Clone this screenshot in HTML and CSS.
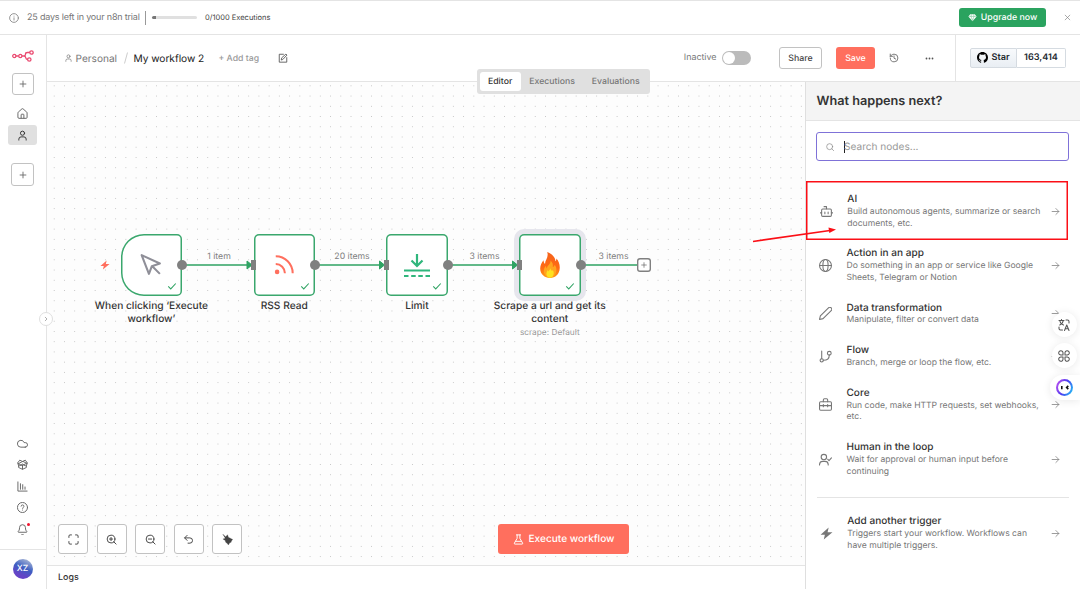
FILE: index.html
```html
<!DOCTYPE html>
<html lang="en">
<head>
  <meta charset="UTF-8">
  <meta name="viewport" content="width=device-width, initial-scale=1.0">
  <title>My workflow 2 - n8n</title>
  <link rel="stylesheet" href="styles.css">
</head>
<body>
  <!-- Shared icons -->
  <svg class="defs">
    <symbol id="i-plus" viewBox="0 0 24 24"><path d="M5 12h14M12 5v14"/></symbol>
    <symbol id="i-user" viewBox="0 0 24 24"><circle cx="12" cy="7" r="4.5"/><path d="M4 22v-2a5 5 0 0 1 5-5h6a5 5 0 0 1 5 5v2"/></symbol>
    <symbol id="i-arrow" viewBox="0 0 24 24"><path d="M3 12h18M13 4l8 8-8 8"/></symbol>
    <symbol id="i-check" viewBox="0 0 24 24"><path d="M3 13l6 6L21 6"/></symbol>
    <symbol id="i-bolt" viewBox="0 0 24 24"><path d="M16 1L1 14.5h8L7 23 23 9.5h-9z"/></symbol>
  </svg>

  <!-- Trial banner -->
  <div class="banner">
    <svg class="icon info" viewBox="0 0 24 24"><circle cx="12" cy="12" r="10.5"/><path d="M12 17v-5.5M12 7.5v.1"/></svg>
    <span class="trial">25 days left in your n8n trial</span>
    <span class="bar-divider"></span>
    <span class="progress"></span>
    <span class="executions">0/1000 Executions</span>
    <button class="upgrade">
      <svg viewBox="0 0 24 24"><path fill="#fff" d="M6 3h12l5 6-11 13L1 9z"/><path stroke="#2aa35f" d="M2 9h20M9 4L8 9l4 11 4-11-1-5"/></svg>
      <span>Upgrade now</span>
    </button>
    <svg class="icon close" viewBox="0 0 24 24"><path d="M4 4l16 16M20 4L4 20"/></svg>
  </div>

  <div class="app">
    <!-- Sidebar -->
    <nav class="sidebar">
      <svg class="logo" viewBox="0 0 22 12"><circle cx="2.3" cy="6" r="1.6"/><circle cx="8.3" cy="6" r="1.6"/><circle cx="19.5" cy="2.5" r="1.7"/><circle cx="17.3" cy="9.5" r="1.7"/><path d="M4 6h2.6M10 6h2M17.8 2.5h-2.3c-1.4 0-2 .7-2 1.7 0 1.2-.5 1.8-1.5 1.8 1 0 1.500.5 1.700 1.700.2 1.200.7 1.800 1.900 1.800"/></svg>
      <button class="side-add"><svg class="icon"><use href="#i-plus"/></svg></button>
      <a class="side-item home"><svg class="icon" viewBox="0 0 24 24"><path d="M2 10.500a2 2 0 0 1 .7-1.500l8-7a2 2 0 0 1 2.600 0l8 7a2 2 0 0 1 .7 1.500V20.500a2 2 0 0 1-2 2H4a2 2 0 0 1-2-2zM9 22v-7a1.500 1.500 0 0 1 1.500-1.500h3A1.500 1.500 0 0 1 15 15v7"/></svg></a>
      <a class="side-item active"><svg class="icon"><use href="#i-user"/></svg></a>
      <button class="side-add second"><svg class="icon"><use href="#i-plus"/></svg></button>

      <div class="side-bottom">
        <svg class="icon" viewBox="0 0 24 24"><path d="M18 20H8.500a7.500 7.500 0 1 1 7-10H18a5 5 0 1 1 0 10z"/></svg>
        <svg class="icon" viewBox="0 0 24 24"><path d="M12 13v9M1.500 8.500l4.500-6L12 5.500l6-3 4.500 6L12 14zM12 5.500L1.500 11l4.500 4L12 11l6 4 4.500-4zM3.500 13.500V18.500l8.500 4 8.500-4v-5"/></svg>
        <svg class="icon" viewBox="0 0 24 24"><path d="M2 2v20h20M7.500 18V6M12.500 18V8M17.500 18v-5"/></svg>
        <svg class="icon" viewBox="0 0 24 24"><circle cx="12" cy="12" r="11"/><path d="M9 9a3 3 0 0 1 6 .8c0 2-3 2.400-3 4.200M12 17.500v.1"/></svg>
        <span class="bell"><svg class="icon" viewBox="0 0 24 24"><path d="M10 22.500a2.200 2.200 0 0 0 4 0M3 18c-1 0-1-1-.5-1.500C4.500 14.500 5.500 12.500 5.500 8a6.500 6.500 0 0 1 13 0c0 4.500 1 6.500 3 8.500.5.5.5 1.500-.5 1.500z"/></svg></span>
      </div>
      <div class="account"><span class="avatar">XZ</span></div>
      <span class="expand"><svg class="icon" viewBox="0 0 24 24"><path d="M9 5l7 7-7 7"/></svg></span>
    </nav>

    <main class="main">
      <!-- Header -->
      <header class="header">
        <svg class="icon crumb-icon"><use href="#i-user"/></svg>
        <span class="crumb">Personal</span>
        <svg class="slash" viewBox="0 0 4 12"><path d="M3.5 .5L.5 11.5"/></svg>
        <span class="name">My workflow 2</span>
        <span class="add-tag">+ Add tag</span>
        <svg class="icon edit" viewBox="0 0 24 24"><path d="M13 3H3v19h18V11M8 16l1-4.500L19 2.500 21.500 5 12 15z"/></svg>
        <span class="inactive">Inactive</span>
        <span class="toggle"></span>
        <button class="btn share">Share</button>
        <button class="btn save">Save</button>
        <svg class="icon history" viewBox="0 0 24 24"><path d="M3 12a9.200 9.200 0 1 0 9.200-9.200A9.500 9.500 0 0 0 5.500 5.500L3 8M3 2.500V8h5.500M12 7v5.500l4 2"/></svg>
        <svg class="dots" viewBox="0 0 9 3"><circle cx="1.5" cy="1.5" r=".9"/><circle cx="4.5" cy="1.5" r=".9"/><circle cx="7.5" cy="1.5" r=".9"/></svg>
        <div class="github">
          <span class="star">
            <svg viewBox="0 0 16 16"><path d="M8 0C3.580 0 0 3.580 0 8c0 3.540 2.290 6.530 5.470 7.590.4.070.55-.17.55-.38 0-.19-.01-.82-.01-1.490-2.010.37-2.530-.49-2.690-.94-.09-.23-.48-.94-.82-1.130-.28-.15-.68-.52-.01-.53.63-.01 1.080.58 1.230.82.720 1.210 1.870.87 2.330.66.07-.52.28-.87.51-1.070-1.780-.2-3.640-.89-3.640-3.950 0-.87.31-1.590.82-2.150-.08-.2-.36-1.020.08-2.120 0 0 .67-.21 2.200.82.64-.18 1.320-.27 2-.27s1.360.09 2 .27c1.530-1.040 2.200-.82 2.200-.82.44 1.100.16 1.920.08 2.120.51.56.82 1.270.82 2.150 0 3.070-1.870 3.750-3.650 3.950.29.25.54.73.54 1.480 0 1.070-.01 1.930-.01 2.200 0 .21.15.46.55.38A8.010 8.010 0 0 0 16 8c0-4.420-3.580-8-8-8z"/></svg>
            Star
          </span>
          <span class="count">163,414</span>
        </div>
      </header>

      <div class="tabs">
        <span class="tab selected">Editor</span>
        <span class="tab">Executions</span>
        <span class="tab">Evaluations</span>
      </div>

      <div class="workspace">
        <div class="left">
          <!-- Workflow canvas -->
          <div class="canvas">
            <svg class="edges" viewBox="0 0 758 484">
              <g class="line"><path d="M135 184H201M268 184H334M400 184H467M533 184H591"/></g>
              <g class="head"><path d="M200 180l5 4-5 4zM332.500 180l5 4-5 4zM465.500 180l5 4-5 4z"/></g>
            </svg>
            <svg class="trigger-bolt"><use href="#i-bolt"/></svg>

            <div class="node trigger n1">
              <svg class="pic cursor" viewBox="0 0 24 24"><path d="M3.500 3l7 18 2.700-7.300L21 11zM13.500 13.500l7.500 7.500"/></svg>
              <svg class="check"><use href="#i-check"/></svg>
              <span class="out"></span>
              <div class="label">When clicking ‘Execute<br>workflow’</div>
            </div>
            <div class="node n2">
              <svg class="pic rss" viewBox="0 0 24 24"><path d="M3 11a10 10 0 0 1 10 10M3 2.500A18.500 18.500 0 0 1 21.500 21"/><circle cx="4.5" cy="19.5" r="2.5"/></svg>
              <svg class="check"><use href="#i-check"/></svg>
              <span class="in"></span><span class="out"></span>
              <div class="label">RSS Read</div>
            </div>
            <div class="node n3">
              <svg class="pic limit" viewBox="0 0 26 26"><path d="M13 1v12M7.500 7.500L13 13l5.500-5.500M0 17.500h26M0 23h4.500M7.200 23h4.500M14.300 23h4.500M21.500 23H26"/></svg>
              <svg class="check"><use href="#i-check"/></svg>
              <span class="in"></span><span class="out"></span>
              <div class="label">Limit</div>
            </div>
            <div class="node chosen n4">
              <svg class="pic flame" viewBox="0 0 20 26">
                <defs>
                  <linearGradient id="fire" x1="0" y1="0" x2="0" y2="1"><stop offset="0" stop-color="#f5631c"/><stop offset=".6" stop-color="#ff6a13"/><stop offset="1" stop-color="#ff9d14"/></linearGradient>
                </defs>
                <path fill="url(#fire)" d="M7.200 0c4.800 2 8.300 5.200 8.200 9.200.8-.7 1-1.600 1-2.700C18.700 9 20 12.500 19.700 16.500 19.400 22 15.500 26 10 26S.3 22 .2 16.800C.1 13.500 1.700 10.500 3.500 8.300c.2 1.700.6 3 1.500 3.800C5 7.500 9 5.500 7.200 0z"/>
                <path fill="#ffa51f" d="M10.500 8.500c2.500 2.200 2.600 4.500 2.300 6.500 1.200-.4 1.700-1.300 1.900-2.300 1.500 1.800 2 3.800 1.600 6.300-.5 3.500-3 6.500-6.300 6.500-3.500 0-6-2.700-6.200-6-.1-2.500 1-4.500 2.200-5.700 0 1.300.3 2 1 2.700C7 13 11 12.500 10.500 8.500z"/>
                <path fill="#ffe21f" d="M10.500 16c.2 2 1 2.200 1.500 3 .4-.2.500-.5.600-1 1.200 1.400 1.500 3 .8 5-.6 1.700-1.700 2.800-3.400 2.800-2.200 0-3.700-1.700-3.600-4 .1-1.800 1-3 1.600-3.700.1.800.2 1.200.6 1.500C9 18 10.500 17.500 10.500 16z"/>
              </svg>
              <svg class="check"><use href="#i-check"/></svg>
              <span class="in"></span><span class="out"></span>
              <div class="label">Scrape a url and get its<br>content<small>scrape: Default</small></div>
            </div>

            <span class="edge-label e1">1 item</span>
            <span class="edge-label e2">20 items</span>
            <span class="edge-label e3">3 items</span>
            <span class="edge-label e4">3 items</span>
            <span class="add-node"><svg class="icon"><use href="#i-plus"/></svg></span>

            <div class="controls">
              <button><svg class="icon" viewBox="0 0 24 24"><path d="M7.500 2H4.500A2.500 2.500 0 0 0 2 4.500v3M22 7.500v-3A2.500 2.500 0 0 0 19.500 2h-3M2 16.500v3A2.500 2.500 0 0 0 4.500 22h3M16.500 22h3a2.500 2.500 0 0 0 2.500-2.500v-3"/></svg></button>
              <button><svg class="icon" viewBox="0 0 24 24"><circle cx="11" cy="11" r="8.5"/><path d="M22 22l-5-5M11 7.500v7M7.500 11h7"/></svg></button>
              <button><svg class="icon" viewBox="0 0 24 24"><circle cx="11" cy="11" r="8.5"/><path d="M22 22l-5-5M7.500 11h7"/></svg></button>
              <button><svg class="icon" viewBox="0 0 24 24"><path d="M9 14L3.500 8.500 9 3M4 8.500h11a5.500 5.500 0 0 1 0 11.500h-4"/></svg></button>
              <button><svg class="icon broom" viewBox="0 0 24 24"><path d="M1.500 0L8 6l4-4.500 2 5.500 9.500 5-3 3-.5 3-3 1-3 5-3-4-3-2-1-4-5-3 5-1.500z"/></svg></button>
            </div>
            <button class="execute">
              <svg class="icon" viewBox="0 0 24 24"><path d="M9 2v7.500L3 20a1.500 1.500 0 0 0 1.500 2h15a1.500 1.500 0 0 0 1.500-2L15 9.500V2M7.500 2h9M6 16h12"/></svg>
              <span>Execute workflow</span>
            </button>
          </div>
          <div class="logs">Logs</div>
        </div>

        <!-- Node creator panel -->
        <aside class="panel">
          <h2>What happens next?</h2>
          <div class="search">
            <svg class="icon" viewBox="0 0 24 24"><circle cx="11" cy="11" r="9"/><path d="M23 23l-5.500-5.500"/></svg>
            <span class="caret"></span>
            <span class="placeholder">Search nodes...</span>
          </div>
          <div class="list">
            <div class="row shifted">
              <svg class="icon" viewBox="0 0 24 24"><path d="M12 7V3H7.500M.5 14.500H3M21 14.500h2.500M9 13v3M15 13v3"/><rect x="3" y="7.5" width="18" height="13.5" rx="2"/></svg>
              <div class="text"><h3>AI</h3><p>Build autonomous agents, summarize or search<br>documents, etc.</p></div>
              <svg class="icon go"><use href="#i-arrow"/></svg>
            </div>
            <div class="row">
              <svg class="icon" viewBox="0 0 24 24"><circle cx="12" cy="12" r="11"/><ellipse cx="12" cy="12" rx="4.8" ry="11"/><path d="M1 12h22"/></svg>
              <div class="text"><h3>Action in an app</h3><p>Do something in an app or service like Google<br>Sheets, Telegram or Notion</p></div>
              <svg class="icon go"><use href="#i-arrow"/></svg>
            </div>
            <div class="row">
              <svg class="icon" viewBox="0 0 24 24"><path d="M22.500 6.500a3.300 3.300 0 0 0-5-5L2.500 16.500 1 23l6.500-1.500z"/></svg>
              <div class="text"><h3>Data transformation</h3><p>Manipulate, filter or convert data</p></div>
              <svg class="icon go"><use href="#i-arrow"/></svg>
            </div>
            <div class="row">
              <svg class="icon" viewBox="0 0 24 24"><path d="M5 2v14M19 9c0 6-4 10-11 10"/><circle cx="5" cy="19" r="3"/><circle cx="19" cy="6" r="3.5"/></svg>
              <div class="text"><h3>Flow</h3><p>Branch, merge or loop the flow, etc.</p></div>
              <svg class="icon go"><use href="#i-arrow"/></svg>
            </div>
            <div class="row">
              <svg class="icon" viewBox="0 0 24 24"><rect x="1" y="7" width="22" height="15.5" rx="2"/><path d="M8 7V3.500a2 2 0 0 1 2-2h4a2 2 0 0 1 2 2V7M1 14h22M8 12v4M16 12v4"/></svg>
              <div class="text"><h3>Core</h3><p>Run code, make HTTP requests, set webhooks,<br>etc.</p></div>
              <svg class="icon go"><use href="#i-arrow"/></svg>
            </div>
            <div class="row">
              <svg class="icon" viewBox="0 0 24 24"><circle cx="9" cy="7.5" r="5"/><path d="M1 22v-1a6 6 0 0 1 6-5.500h4a6 6 0 0 1 6 5.500v1M16 11.500l2.500 2.500 4.500-5"/></svg>
              <div class="text"><h3>Human in the loop</h3><p>Wait for approval or human input before<br>continuing</p></div>
              <svg class="icon go"><use href="#i-arrow"/></svg>
            </div>
            <hr>
            <div class="row shifted">
              <svg class="icon solid"><use href="#i-bolt"/></svg>
              <div class="text"><h3>Add another trigger</h3><p>Triggers start your workflow. Workflows can<br>have multiple triggers.</p></div>
              <svg class="icon go"><use href="#i-arrow"/></svg>
            </div>
          </div>
        </aside>
      </div>
    </main>
  </div>

  <!-- Floating assistant buttons -->
  <div class="float round translate"><svg class="icon" viewBox="0 0 24 24"><path d="M2 3h10M7 1v2M3.500 12C8 10 10 7 10.500 3M4 5c1 4 4 6 7 7M16 2h3a3 3 0 0 1 3 3v3M2 16v3a3 3 0 0 0 3 3h4M13 23l4.500-11L22 23M14.500 19.500h6"/></svg></div>
  <div class="float round apps"><svg class="icon" viewBox="0 0 24 24"><path d="M10 10H6a4.300 4.300 0 1 1 4-4zM14 10V6a4.300 4.300 0 1 1 4 4zM10 14v4a4.300 4.300 0 1 1-4-4zM14 14h4a4.300 4.300 0 1 1-4 4z"/></svg></div>
  <div class="float monica">
    <span class="ring"><svg viewBox="0 0 12 12"><path d="M3.500 4.500v3M9.500 4.500L8 6l1.500 1.500"/></svg></span>
  </div>

  <!-- Highlight on the AI entry -->
  <div class="highlight"></div>
  <svg class="pointer" viewBox="0 0 90 20"><path d="M1 15.500L78 4.500" stroke="#fb0f16" stroke-width="1.7"/><path fill="#fb0f16" d="M84 3.500l-7.500-2 .8 5.500z"/></svg>
</body>
</html>
```
FILE: styles.css
```css
* {
  margin: 0;
  padding: 0;
  box-sizing: border-box;
}

body {
  width: 1080px;
  height: 589px;
  display: flex;
  flex-direction: column;
  position: relative;
  overflow: hidden;
  background: #fff;
  color: #333;
  font-family: Inter, "Liberation Sans", sans-serif;
  text-rendering: geometricPrecision;
}

button {
  font-family: inherit;
  border: 1px solid #c2c2c2;
  border-radius: 3px;
  background: #fff;
  display: flex;
  align-items: center;
  justify-content: center;
  text-rendering: inherit;
}

.defs {
  display: none;
}

svg {
  flex: none;
}

.icon {
  width: 11px;
  height: 11px;
  fill: none;
  stroke: #666;
  stroke-width: 2.1;
  stroke-linecap: round;
  stroke-linejoin: round;
}

/* Trial banner */
.banner {
  height: 35px;
  flex: none;
  display: flex;
  align-items: center;
  padding: 0 9px;
  border-top: 1px solid #e4e4e4;
  border-bottom: 1px solid #e4e4e4;
}

.info {
  width: 10px;
  height: 10px;
  stroke: #888;
}

.trial {
  width: 113px;
  margin-left: 8px;
  font-size: 9px;
  letter-spacing: -.19px;
  color: #777;
  white-space: nowrap;
}

.bar-divider {
  width: 1px;
  height: 14px;
  margin-left: 5px;
  background: #999;
}

.progress {
  width: 45px;
  height: 3px;
  margin: 0 8px 0 6px;
  border-radius: 2px;
  background: linear-gradient(to right, #777 4px, #e0e0e0 4px);
}

.executions {
  font-size: 7.5px;
  color: #444;
}

.upgrade {
  width: 87px;
  height: 19px;
  margin-left: auto;
  gap: 4px;
  border: none;
  background: #2aa35f;
  color: #fff;
  font-size: 8.8px;
  font-weight: 500;
}

.upgrade svg {
  width: 9px;
  height: 9px;
  fill: none;
}

.close {
  width: 7px;
  height: 7px;
  margin-left: 18px;
  stroke: #777;
}

.app {
  flex: 1;
  display: flex;
  min-height: 0;
}

/* Sidebar */
.sidebar {
  width: 47px;
  flex: none;
  display: flex;
  flex-direction: column;
  align-items: center;
  position: relative;
  padding: 15px 1px 0 0;
  border-right: 1px solid #e4e4e4;
}

.logo {
  width: 22px;
  height: 12px;
  fill: none;
  stroke: #ea4b71;
  stroke-width: 1.3;
}

.side-add {
  width: 22px;
  height: 22px;
  margin-top: 11px;
}

.side-add .icon {
  width: 10px;
  height: 10px;
}

.side-add.second {
  width: 23px;
  height: 23px;
  margin-top: 18px;
}

.side-item {
  width: 29px;
  height: 20px;
  display: flex;
  align-items: center;
  justify-content: center;
  border-radius: 3px;
}

.home {
  margin: 8px 0 2px;
}

.side-item.active {
  background: #e0e0e0;
}

.active .icon {
  stroke: #333;
}

.side-bottom {
  margin-top: auto;
  padding-bottom: 14.5px;
  display: flex;
  flex-direction: column;
  gap: 10.4px;
}

.bell {
  height: 11px;
  position: relative;
}

.bell .icon {
  display: block;
}

.bell::after {
  content: "";
  position: absolute;
  top: -1px;
  right: -2px;
  width: 3px;
  height: 3px;
  border-radius: 50%;
  background: #f0142f;
}

.account {
  width: 46px;
  height: 40px;
  display: flex;
  justify-content: center;
  padding-top: 9px;
  border-top: 1px solid #e4e4e4;
}

.avatar {
  width: 20px;
  height: 20px;
  border-radius: 50%;
  background: linear-gradient(25deg, #6544c6 25%, #3d5fc2 55%, #a6b5d5 90%);
  color: #fff;
  font-size: 8.5px;
  font-weight: 500;
  line-height: 20px;
  text-align: center;
}

.expand {
  position: absolute;
  top: 277px;
  right: -7px;
  z-index: 2;
  width: 14px;
  height: 14px;
  display: flex;
  align-items: center;
  justify-content: center;
  border: 1px solid #dfdfdf;
  border-radius: 50%;
  background: #fff;
}

.expand .icon {
  width: 6px;
  height: 6px;
}

/* Header */
.main {
  flex: 1;
  display: flex;
  flex-direction: column;
  position: relative;
  min-width: 0;
}

.header {
  height: 47px;
  flex: none;
  display: flex;
  align-items: center;
  padding-left: 17px;
  border-bottom: 1px solid #e4e4e4;
  line-height: 14px;
  white-space: nowrap;
}

.crumb-icon {
  width: 9px;
  height: 8px;
  stroke: #777;
}

.crumb {
  width: 42px;
  margin-left: 2.5px;
  padding-top: 1px;
  font-size: 10.1px;
  color: #777;
}

.slash {
  width: 4px;
  height: 12px;
  margin: 0 6px;
  stroke: #ccc;
}

.name {
  width: 70px;
  padding-top: 1px;
  font-size: 10.2px;
  letter-spacing: -.04px;
  color: #222;
}

.add-tag {
  width: 41px;
  margin-left: 15px;
  padding-top: 1px;
  font-size: 8.7px;
  font-weight: 500;
  color: #999;
}

.edit {
  width: 10px;
  height: 10px;
  margin-left: 18px;
  stroke: #555;
}

.inactive {
  margin-left: auto;
  font-size: 8.9px;
  color: #777;
}

.toggle {
  width: 29px;
  height: 14px;
  margin-left: 5.5px;
  padding: 1px;
  border-radius: 7px;
  background: #bbb;
}

.toggle::before {
  content: "";
  display: block;
  width: 12px;
  height: 12px;
  border-radius: 50%;
  background: #fff;
}

.btn {
  height: 22px;
  font-size: 8.8px;
  font-weight: 500;
  color: #444;
}

.share {
  width: 43px;
  margin-left: 28px;
}

.save {
  width: 39px;
  margin-left: 14px;
  border: none;
  background: #ff6f5e;
  color: #fff;
}

.history {
  width: 10px;
  height: 10px;
  margin-left: 13.5px;
}

.dots {
  width: 9px;
  height: 3px;
  margin-left: 26.5px;
  fill: #555;
}

.github {
  height: 100%;
  width: 125px;
  display: flex;
  align-items: center;
  margin-left: 21px;
  padding: 0 0 1px 14px;
  border-left: 1px solid #e4e4e4;
  font-size: 9.1px;
  font-weight: 600;
  color: #24292f;
}

.star,
.count {
  height: 20px;
  display: flex;
  align-items: center;
  justify-content: center;
  border: 1px solid #d5dbe1;
}

.star {
  width: 47px;
  gap: 3px;
  border-radius: 2px 0 0 2px;
  background: linear-gradient(#f8fafc, #e9eef3);
}

.star svg {
  width: 11px;
  height: 11px;
}

.count {
  width: 49px;
  border-left: none;
  border-radius: 0 2px 2px 0;
}

/* View tabs */
.tabs {
  position: absolute;
  top: 34px;
  left: 430px;
  z-index: 2;
  width: 173px;
  height: 25px;
  padding: 3px 2.5px;
  display: flex;
  border-radius: 3px;
  background: #e0e0e0;
}

.tab {
  padding: 0 8.5px;
  border-radius: 3px;
  font-size: 8.7px;
  font-weight: 500;
  line-height: 20px;
  color: #777;
}

.tab.selected {
  background: #fff;
  color: #333;
}

.workspace {
  flex: 1;
  display: flex;
  min-height: 0;
}

.left {
  flex: 1;
  display: flex;
  flex-direction: column;
  min-width: 0;
}

/* Canvas, nodes are placed freely */
.canvas {
  flex: 1;
  position: relative;
  background-color: #fdfdfd;
  background-image: radial-gradient(circle, #c4c4c4 .5px, transparent .9px);
  background-size: 10.24px 10.24px;
  background-position: 2.1px -1.3px;
}

.edges {
  position: absolute;
  top: -1px;
  left: 0;
  z-index: 1;
  width: 758px;
  height: 484px;
}

.line {
  fill: none;
  stroke: #2fa363;
  stroke-width: 1.5;
}

.head {
  fill: #2fa363;
  stroke: #2fa363;
  stroke-linejoin: round;
}

.trigger-bolt {
  position: absolute;
  top: 178px;
  left: 53px;
  width: 10px;
  height: 10px;
  fill: #ff6f5e;
}

.node {
  position: absolute;
  top: 152px;
  width: 61.5px;
  height: 62px;
  border-radius: 5px;
  background: #fff;
  box-shadow: inset 0 0 0 1.5px #3aa76d;
}

.node.trigger {
  border-radius: 23px 5px 5px 23px;
}

.node.chosen {
  box-shadow: inset 0 0 0 1.5px #3aa76d, 0 0 0 5px #e6e6ed;
}

.n1 { left: 73.7px; }
.n2 { left: 206.5px; }
.n3 { left: 339.2px; }
.n4 { left: 472px; }

.pic {
  position: absolute;
  fill: none;
}

.cursor {
  top: 18px;
  left: 17.5px;
  width: 25px;
  height: 25px;
  stroke: #8f8f98;
  stroke-width: 2;
  stroke-linejoin: round;
}

.rss {
  top: 20px;
  left: 19.5px;
  width: 22px;
  height: 22px;
  stroke: #ff6f5e;
  stroke-width: 2.2;
}

.rss circle {
  fill: #ff6f5e;
  stroke: none;
}

.limit {
  top: 18.5px;
  left: 18px;
  width: 26px;
  height: 26px;
  stroke: #2fb67c;
  stroke-width: 2.2;
}

.flame {
  top: 18px;
  left: 20.5px;
  width: 20px;
  height: 26px;
}

.check {
  position: absolute;
  right: 5.5px;
  bottom: 5.5px;
  width: 10px;
  height: 10px;
  fill: none;
  stroke: #2fa363;
  stroke-width: 2.5;
}

.in,
.out {
  position: absolute;
  top: 26px;
  z-index: 2;
  height: 10px;
  background: #808080;
}

.in {
  left: -2.5px;
  width: 5px;
}

.out {
  right: -5px;
  width: 10px;
  border-radius: 50%;
}

.label {
  position: absolute;
  top: 66.3px;
  left: 50%;
  width: 130px;
  transform: translateX(-50%);
  font-size: 10.2px;
  font-weight: 500;
  line-height: 13px;
  text-align: center;
}

.label small {
  display: block;
  margin-top: 1px;
  font-size: 8.3px;
  font-weight: 400;
  color: #999;
}

.edge-label {
  position: absolute;
  top: 170px;
  transform: translateX(-50%);
  background: #fdfdfd;
  font-size: 8.7px;
  line-height: 11px;
  color: #808080;
  white-space: nowrap;
}

.e1 { left: 172px; }
.e2 { left: 305px; }
.e3 { left: 437.5px; }
.e4 { left: 566.5px; }

.add-node {
  position: absolute;
  top: 176px;
  left: 590px;
  z-index: 1;
  width: 14px;
  height: 14px;
  display: flex;
  align-items: center;
  justify-content: center;
  border-radius: 3px;
  background: #fff;
  box-shadow: inset 0 0 0 1.4px #808080;
}

.add-node .icon {
  width: 8px;
  height: 8px;
}

.controls {
  position: absolute;
  bottom: 11px;
  left: 11px;
  display: flex;
  gap: 8.5px;
}

.controls button {
  width: 30px;
  height: 30px;
}

.controls .icon {
  stroke: #444;
}

.controls .broom {
  fill: #444;
  stroke-width: .5;
}

.execute {
  position: absolute;
  left: 451px;
  bottom: 11px;
  width: 131px;
  height: 30px;
  gap: 5px;
  border: none;
  background: #ff6f5e;
  color: #fff;
  font-size: 10.1px;
  font-weight: 500;
}

.execute .icon {
  stroke: #fff;
}

.logs {
  height: 24px;
  padding-left: 11px;
  border-top: 1px solid #e4e4e4;
  font-size: 8.9px;
  font-weight: 500;
  line-height: 24px;
}

/* Node creator */
.panel {
  width: 275px;
  flex: none;
  border-left: 1px solid #dfdfdf;
}

.panel h2 {
  height: 39px;
  padding-left: 10.5px;
  border-bottom: 1px solid #e4e4e4;
  background: #f4f4f4;
  font-size: 12.7px;
  font-weight: 600;
  line-height: 40px;
}

.search {
  width: 253px;
  height: 29px;
  margin: 11px 0 22.9px 10px;
  padding-left: 9px;
  display: flex;
  align-items: center;
  border: 1px solid #7f72d8;
  border-radius: 3px;
  font-size: 10.1px;
  color: #999;
}

.search .icon {
  width: 8px;
  height: 8px;
  stroke: #888;
}

.caret {
  width: 1px;
  height: 12px;
  margin-left: 10px;
  background: #222;
}

.placeholder {
  margin-left: -1px;
}

.row {
  display: flex;
  align-items: center;
  padding: 8.2px 20.5px 8.1px 13px;
}

.row > .icon {
  width: 13px;
  height: 13px;
  stroke: #777;
  stroke-width: 2;
}

.row > .solid {
  fill: #777;
  stroke: none;
}

.row > .go {
  width: 9px;
  height: 9px;
  margin-left: auto;
  stroke: #888;
  stroke-width: 2.2;
}

.text {
  margin-left: 14.5px;
  white-space: nowrap;
}

.shifted > .icon:first-child {
  margin-left: .8px;
}

.text h3 {
  margin-bottom: .95px;
  font-size: 10.05px;
  font-weight: 500;
  line-height: 14px;
}

.text p {
  font-size: 8.6px;
  line-height: 11.5px;
  color: #777;
}

.list hr {
  width: 252px;
  margin: 10.3px 0 8.5px 11px;
  border: none;
  border-top: 1px solid #e4e4e4;
}

/* Floating buttons */
.float {
  position: absolute;
  z-index: 3;
  display: flex;
  align-items: center;
  justify-content: center;
  background: #fff;
  box-shadow: 0 1px 8px rgba(0, 0, 0, .09);
}

.round {
  left: 1051.5px;
  width: 25px;
  height: 25px;
  border-radius: 50%;
}

.float .icon {
  width: 12px;
  height: 12px;
  stroke: #555;
}

.translate { top: 312px; }
.apps { top: 343px; }

.monica {
  top: 375px;
  left: 1050px;
  width: 30px;
  height: 25px;
  padding-right: 1px;
  border-radius: 13px 0 0 13px;
}

.ring {
  width: 17px;
  height: 17px;
  padding: 2px;
  border-radius: 50%;
  background: linear-gradient(115deg, #a94bf0 15%, #4a3cf0 50%, #25b8f5 90%);
}

.ring svg {
  display: block;
  width: 13px;
  height: 13px;
  border-radius: 50%;
  background: #fff;
  fill: none;
  stroke: #111;
  stroke-width: 1.5;
}

/* Annotation */
.highlight {
  position: absolute;
  top: 181px;
  left: 806px;
  z-index: 4;
  width: 262px;
  height: 59px;
  box-shadow: inset 0 0 0 1.5px #fb0f16;
}

.pointer {
  position: absolute;
  top: 226px;
  left: 752px;
  z-index: 4;
  width: 90px;
  height: 20px;
}
```
